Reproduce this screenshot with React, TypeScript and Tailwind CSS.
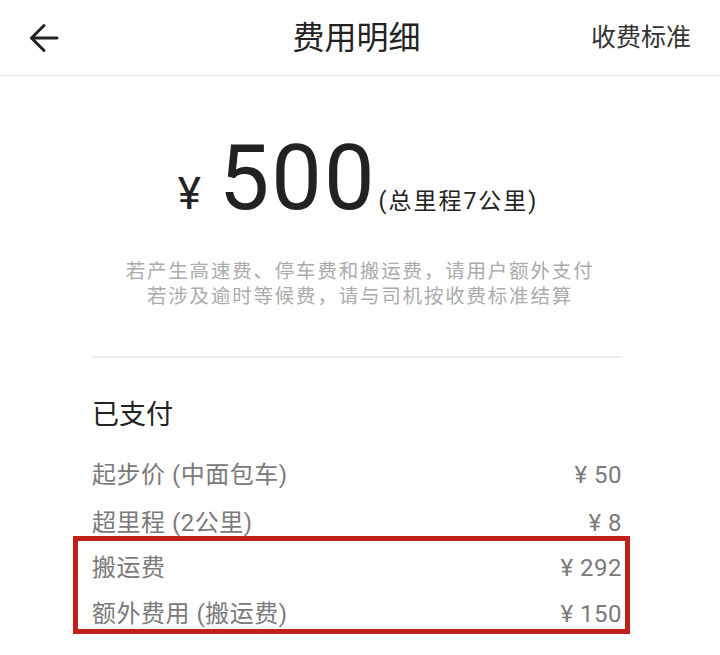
import React from 'react';

const font = { fontFamily: 'Roboto, "Noto Sans CJK SC", sans-serif' };

const rows = [
    { label: '起步价 (中面包车)', amount: '¥ 50' },
    { label: '超里程 (2公里)', amount: '¥ 8' },
];

const Row = ({ label, amount, className }: { label: string; amount: string; className: string }): JSX.Element => (
    <div className={`flex items-center justify-between text-[24px] leading-none tracking-[0.5px] text-[#7a7a7a] ${className}`}>
        <span>{label}</span>
        <span>{amount}</span>
    </div>
);

const App = (): JSX.Element => {
    return (
        <div className="w-[720px] h-[655px] bg-white overflow-hidden" style={font}>
            <header className="h-[76px] border-b border-[#e4e4e4] grid grid-cols-[1fr_auto_1fr] items-center">
                <div className="pl-[29px] flex items-center">
                    <svg width="30" height="30" viewBox="0 0 30 30" fill="none" stroke="#222" strokeWidth="3" strokeLinecap="round" strokeLinejoin="round">
                        <path d="M28 15H3" />
                        <path d="M15 2.5L2.5 15L15 27.5" />
                    </svg>
                </div>
                <h1 className="pr-[7px] text-[32px] leading-none text-[#222]">费用明细</h1>
                <div className="pr-[29px] flex justify-end text-[25px] leading-none text-[#333]">收费标准</div>
            </header>

            <div className="mt-[58px] flex items-baseline justify-center pr-[4px] text-[#222]">
                <span className="text-[44px] leading-none mr-[18px]">¥</span>
                <span className="text-[90px] leading-none tracking-[2px]">500</span>
                <span className="text-[23px] leading-none tracking-[2px] ml-[2px]">(总里程7公里)</span>
            </div>

            <div className="mt-[35px] text-center text-[19.5px] leading-[25px] tracking-[1.8px] text-[#ababab]">
                <p>若产生高速费、停车费和搬运费，请用户额外支付</p>
                <p>若涉及逾时等候费，请与司机按收费标准结算</p>
            </div>

            <div className="ml-[92px] w-[530px]">
                <div className="mt-[47px] h-[2px] bg-[#ececec]" />

                <h2 className="mt-[39px] mb-[18px] text-[27px] leading-[36px] text-[#222]">已支付</h2>

                {rows.map((row) => (
                    <Row key={row.label} label={row.label} amount={row.amount} className="h-[48px]" />
                ))}

                {/* highlighted extra charges */}
                <div className="-mt-[11px] ml-[-19px] mr-[-8px] border-[5px] border-[#c21f1a] pl-[14px] pr-[3px] pt-[4px]">
                    <Row label="搬运费" amount="¥ 292" className="h-[46px]" />
                    <Row label="额外费用 (搬运费)" amount="¥ 150" className="h-[38px] pt-[8px]" />
                </div>
            </div>
        </div>
    );
};

export default App;
